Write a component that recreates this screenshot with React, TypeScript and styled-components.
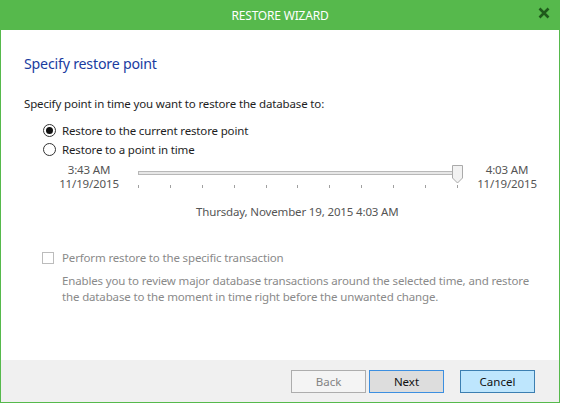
import React from "react";
import styled, { createGlobalStyle } from "styled-components";

const Global = createGlobalStyle`
  html, body { margin: 0; padding: 0; background: #ffffff; }
  body { font-family: "Noto Sans", "Open Sans", sans-serif; }
`;

const Window = styled.div`
  box-sizing: border-box;
  width: 560px;
  height: 403px;
  border: 1px solid #56b94c;
  border-top: none;
  display: flex;
  flex-direction: column;
  background: #ffffff;
`;

const TitleBar = styled.div`
  height: 30px;
  margin: 0 -1px;
  background: #56b94c;
  color: #ffffff;
  font-size: 12px;
  display: flex;
  align-items: center;
  justify-content: center;
  position: relative;
  letter-spacing: -0.2px;
`;

const Close = styled.div`
  position: absolute;
  right: 10px;
  top: 6px;
  width: 12px;
  height: 12px;
`;

const Body = styled.div`
  flex: 1;
  padding: 0 0 0 23px;
  display: flex;
  flex-direction: column;
  font-size: 11.5px;
  color: #1e1e1e;
`;

const Heading = styled.div`
  margin-top: 24px;
  font-size: 14.2px;
  color: #1a3c9f;
  letter-spacing: -0.2px;
`;

const Prompt = styled.div`
  margin-top: 23px;
  letter-spacing: -0.15px;
`;

const Options = styled.div`
  margin-top: 11px;
  padding-left: 19px;
  display: flex;
  flex-direction: column;
  gap: 3px;
`;

const RadioRow = styled.label`
  display: flex;
  align-items: center;
  gap: 6px;
  height: 16px;
  letter-spacing: -0.15px;
`;

const RadioCircle = styled.span<{ $on?: boolean }>`
  box-sizing: border-box;
  width: 13px;
  height: 13px;
  border-radius: 50%;
  border: 1px solid #333333;
  background: #ffffff;
  display: flex;
  align-items: center;
  justify-content: center;
  &::after {
    content: "";
    display: ${(p) => (p.$on ? "block" : "none")};
    width: 7px;
    height: 7px;
    border-radius: 50%;
    background: #111111;
  }
`;

const SliderRow = styled.div`
  display: flex;
  align-items: flex-start;
  margin-top: 6px;
  margin-left: 16px;
`;

const TimeLabel = styled.div<{ $w: number }>`
  width: ${(p) => p.$w}px;
  text-align: center;
  color: #555555;
  line-height: 14px;
  letter-spacing: -0.15px;
`;

const SliderArea = styled.div`
  position: relative;
  width: 334px;
  height: 28px;
`;

const Track = styled.div`
  position: absolute;
  left: 0;
  top: 8px;
  width: 320px;
  height: 4px;
  box-sizing: border-box;
  border: 1px solid #b8b8b8;
  background: #e7e7e7;
`;

const Ticks = styled.div`
  position: absolute;
  left: 0;
  top: 22px;
  width: 320px;
  display: flex;
  justify-content: space-between;
`;

const Tick = styled.span`
  width: 1px;
  height: 3px;
  background: #a0a0a0;
`;

const Thumb = styled.svg`
  position: absolute;
  left: 314px;
  top: 2px;
`;

const DateLine = styled.div`
  margin-top: 13px;
  padding-left: 172px;
  color: #555555;
  letter-spacing: -0.15px;
`;

const CheckRow = styled.label`
  margin-top: 31px;
  margin-left: 18px;
  display: flex;
  align-items: center;
  gap: 8px;
  color: #8a8a8a;
  letter-spacing: -0.15px;
`;

const CheckBox = styled.span`
  box-sizing: border-box;
  width: 12px;
  height: 12px;
  border: 1px solid #bcbcbc;
  background: #ffffff;
`;

const Desc = styled.div`
  margin-top: 8px;
  margin-left: 38px;
  width: 480px;
  color: #8a8a8a;
  line-height: 16px;
  letter-spacing: -0.15px;
`;

const Footer = styled.div`
  height: 42px;
  background: #f0f0f0;
  display: flex;
  align-items: center;
  justify-content: flex-end;
  padding-right: 24px;
  gap: 3px;
`;

const Button = styled.button<{ $kind: "disabled" | "focus" | "default" }>`
  box-sizing: border-box;
  width: 75px;
  height: 23px;
  font-family: "Noto Sans", "Open Sans", sans-serif;
  font-size: 11.5px;
  padding: 0;
  border: 1px solid
    ${(p) => (p.$kind === "disabled" ? "#adadad" : p.$kind === "focus" ? "#3c8fe0" : "#3c7fb1")};
  background: ${(p) => (p.$kind === "disabled" ? "#f4f4f4" : p.$kind === "focus" ? "#dddddd" : "#bee6fd")};
  color: ${(p) => (p.$kind === "disabled" ? "#838383" : "#111111")};
  margin-left: ${(p) => (p.$kind === "default" ? "13px" : "0")};
`;

export default function App() {
  return (
    <>
      <Global />
      <Window>
        <TitleBar>
          RESTORE WIZARD
          <Close>
            <svg width="12" height="12" viewBox="0 0 12 12">
              <path d="M1.5 1.5 L10.5 10.5 M10.5 1.5 L1.5 10.5" stroke="#1f5a1b" strokeWidth="2.6" />
            </svg>
          </Close>
        </TitleBar>
        <Body>
          <Heading>Specify restore point</Heading>
          <Prompt>Specify point in time you want to restore the database to:</Prompt>
          <Options>
            <RadioRow>
              <RadioCircle $on />
              Restore to the current restore point
            </RadioRow>
            <RadioRow>
              <RadioCircle />
              Restore to a point in time
            </RadioRow>
          </Options>
          <SliderRow>
            <TimeLabel $w={98}>
              3:43 AM
              <br />
              11/19/2015
            </TimeLabel>
            <SliderArea>
              <Track />
              <Ticks>
                {Array.from({ length: 11 }).map((_, i) => (
                  <Tick key={i} />
                ))}
              </Ticks>
              <Thumb width="12" height="19" viewBox="0 0 12 19">
                <path d="M0.5 0.5 H10.5 V13 L5.5 18 L0.5 13 Z" fill="#f2f2f2" stroke="#aaaaaa" />
              </Thumb>
            </SliderArea>
            <TimeLabel $w={70}>
              4:03 AM
              <br />
              11/19/2015
            </TimeLabel>
          </SliderRow>
          <DateLine>Thursday, November 19, 2015 4:03 AM</DateLine>
          <CheckRow>
            <CheckBox />
            Perform restore to the specific transaction
          </CheckRow>
          <Desc>
            Enables you to review major database transactions around the selected time, and restore the
            database to the moment in time right before the unwanted change.
          </Desc>
        </Body>
        <Footer>
          <Button $kind="disabled" disabled>
            Back
          </Button>
          <Button $kind="focus">Next</Button>
          <Button $kind="default">Cancel</Button>
        </Footer>
      </Window>
    </>
  );
}
